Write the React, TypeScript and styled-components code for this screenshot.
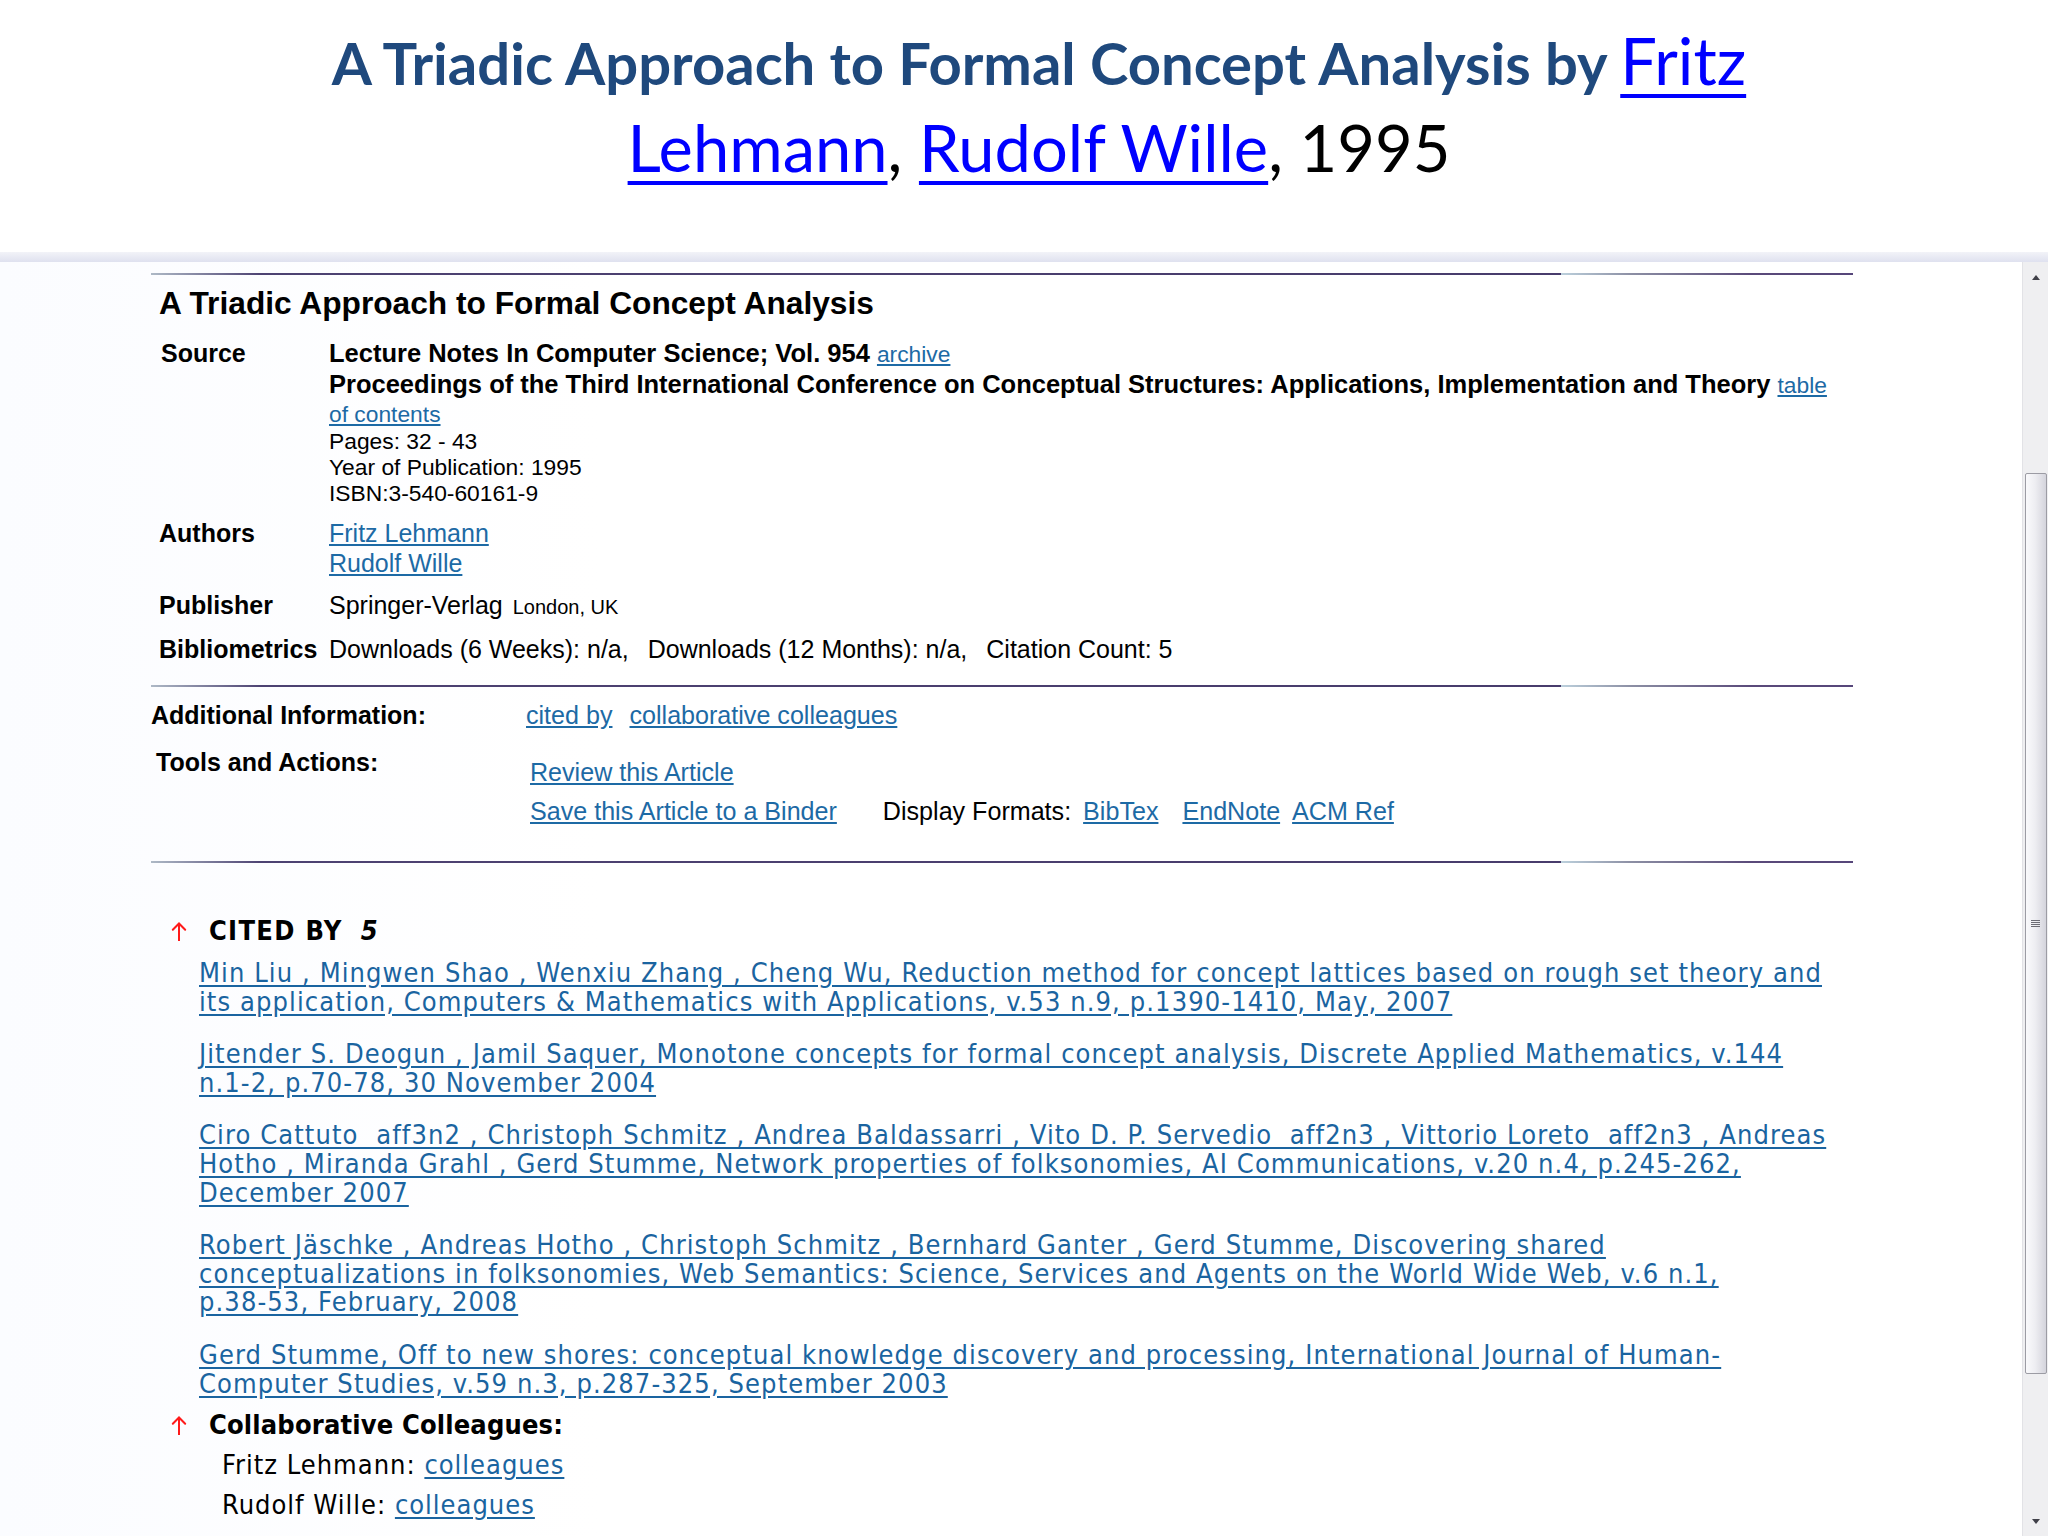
import React from "react";
import styled, { createGlobalStyle } from "styled-components";

const GlobalStyle = createGlobalStyle`
  html, body { margin: 0; padding: 0; background: #ffffff; }
  #root { width: 2048px; height: 1536px; }
`;

const Page = styled.div`
  width: 2048px;
  height: 1536px;
  overflow: hidden;
  display: flex;
  flex-direction: column;
  background: #ffffff;
`;

const SlideTitle = styled.h1`
  margin: 0;
  height: 252px;
  box-sizing: border-box;
  padding: 18px 250px 0 280px;
  text-align: center;
  font-family: Lato, "Open Sans", sans-serif;
  font-size: 58px;
  line-height: 85px;
  font-weight: 700;
  color: #1f497d;
`;

const TitleLink = styled.a`
  font-size: 65px;
  font-weight: 400;
  color: #0000ff;
  text-decoration: underline;
  text-decoration-thickness: 4px;
  text-underline-offset: 9px;
`;

const TitlePlain = styled.span`
  font-size: 65px;
  font-weight: 400;
  color: #000000;
`;

const Browser = styled.div`
  flex: 1;
  display: flex;
  flex-direction: column;
  min-height: 0;
`;

const TopBand = styled.div`
  height: 10px;
  background: linear-gradient(to bottom, #f2f3f8 0%, #dfe1ef 100%);
`;

const Viewport = styled.div`
  flex: 1;
  display: flex;
  min-height: 0;
`;

const Content = styled.div`
  flex: 1;
  padding: 11px 0 0 151px;
  font-family: "Liberation Sans", Arial, sans-serif;
  color: #000000;
  background: linear-gradient(to right, #fbfcff 0px, #ffffff 600px);
`;

const Rule = styled.div`
  width: 1702px;
  height: 2px;
  background: linear-gradient(
    to right,
    #aeb9c6 0px,
    #4d4272 110px,
    #483c6c 1410px,
    #bcd0dc 1410px,
    #8c8fa4 1480px,
    #5a4a7a 1600px,
    #56467a 1702px
  );
`;

const ArticleHeading = styled.h2`
  margin: 10px 0 0 8px;
  font-size: 31.7px;
  line-height: 36px;
  font-weight: 700;
`;

const DetailTable = styled.div`
  margin: 17px 0 21px 8px;
  display: grid;
  grid-template-columns: 170px 1510px;
  row-gap: 12px;
`;

const Label = styled.div<{ $indent?: number }>`
  font-size: 25px;
  line-height: 30px;
  font-weight: 700;
  padding-left: ${(p) => p.$indent ?? 0}px;
`;

const Value = styled.div`
  display: flex;
  flex-direction: column;
`;

const BoldLine = styled.div<{ $lh: number }>`
  font-size: 25.5px;
  line-height: ${(p) => p.$lh}px;
  font-weight: 700;
`;

const SmallLine = styled.div`
  font-size: 22.8px;
  line-height: 26px;
`;

const TextLine = styled.div<{ $gap?: number }>`
  font-size: 25px;
  line-height: 30px;
  display: flex;
  align-items: baseline;
  gap: ${(p) => p.$gap ?? 0}px;
`;

const SmallLink = styled.a`
  font-size: 22.8px;
  font-weight: 400;
  color: #1d6aa5;
  text-decoration: underline;
`;

const AcmLink = styled.a`
  color: #1d6aa5;
  text-decoration: underline;
  text-underline-offset: 2px;
`;

const Location = styled.span`
  font-size: 20px;
  margin-left: 10px;
`;

const ActionTable = styled.div`
  margin: 13px 0 35px 0;
  display: grid;
  grid-template-columns: 375px 1fr;
  row-gap: 17px;
`;

const ActionLabel = styled.div<{ $indent: number }>`
  font-size: 25px;
  line-height: 30px;
  font-weight: 700;
  padding-left: ${(p) => p.$indent}px;
`;

const ActionValues = styled.div<{ $indent: number; $top: number }>`
  padding-left: ${(p) => p.$indent}px;
  padding-top: ${(p) => p.$top}px;
  display: flex;
  flex-direction: column;
  row-gap: 9px;
  font-size: 25.1px;
  line-height: 30px;
`;

const Spaced = styled.span<{ $ml: number }>`
  margin-left: ${(p) => p.$ml}px;
`;

const Section = styled.section`
  font-family: "DejaVu Sans Condensed", "DejaVu Sans", sans-serif;
  font-stretch: condensed;
`;

const SectionHeading = styled.div<{ $top: number; $spacing: number }>`
  margin: ${(p) => p.$top}px 0 0 20px;
  display: flex;
  align-items: center;
  gap: 22px;
  font-size: 27px;
  line-height: 32px;
  font-weight: 700;
  letter-spacing: ${(p) => p.$spacing}px;
  color: #000;
`;

const Count = styled.span`
  font-style: italic;
  margin-left: 18px;
`;

const CitationList = styled.div`
  margin: 12px 0 0 48px;
  display: flex;
  flex-direction: column;
  row-gap: 24px;
`;

const Citation = styled.a`
  display: block;
  font-size: 27px;
  line-height: 28.6px;
  letter-spacing: 1.1px;
  white-space: nowrap;
  color: #1a64a0;
  text-decoration: underline;
  text-underline-offset: 3px;
`;

const ColleagueList = styled.div`
  margin: 8px 0 0 71px;
  display: flex;
  flex-direction: column;
  row-gap: 8px;
`;

const ColleagueRow = styled.div`
  font-size: 27px;
  line-height: 32px;
  letter-spacing: 1px;
  color: #000;
`;

const ColleagueLink = styled.a`
  color: #1a64a0;
  text-decoration: underline;
  text-underline-offset: 3px;
`;

const Scrollbar = styled.div`
  width: 26px;
  background: #efeff1;
  border-left: 1px solid #e2e2e6;
  display: flex;
  flex-direction: column;
  align-items: center;
  box-sizing: border-box;
`;

const ArrowButton = styled.div`
  height: 30px;
  width: 100%;
  display: flex;
  align-items: center;
  justify-content: center;
`;

const Thumb = styled.div<{ $top: number; $height: number }>`
  margin-top: ${(p) => p.$top}px;
  height: ${(p) => p.$height}px;
  width: 22px;
  box-sizing: border-box;
  border: 1px solid #9c9ca4;
  border-radius: 2px;
  background: linear-gradient(to right, #fafafc 0%, #eeeef2 45%, #d4d4dc 100%);
  display: flex;
  align-items: center;
  justify-content: center;
`;

const Gripper = styled.div`
  width: 9px;
  height: 8px;
  background: repeating-linear-gradient(
    to bottom,
    #6c6c74 0px,
    #6c6c74 1px,
    transparent 1px,
    transparent 2px
  );
`;

const TrackFill = styled.div`
  flex: 1;
`;

const UpArrow = () => (
  <svg width="16" height="21" viewBox="0 0 16 21" aria-hidden>
    <line x1="8" y1="2.5" x2="8" y2="20" stroke="#ff1a1a" strokeWidth="2" />
    <polyline
      points="1.8,8.8 8,2.5 14.2,8.8"
      fill="none"
      stroke="#ff1a1a"
      strokeWidth="2"
      strokeLinecap="round"
    />
  </svg>
);

const ScrollTriangle = ({ up }: { up: boolean }) => (
  <svg width="8" height="5" viewBox="0 0 8 5" aria-hidden>
    <polygon points={up ? "0,5 4,0 8,5" : "0,0 8,0 4,5"} fill="#404048" />
  </svg>
);

const citations: string[][] = [
  [
    "Min Liu , Mingwen Shao , Wenxiu Zhang , Cheng Wu, Reduction method for concept lattices based on rough set theory and",
    "its application, Computers & Mathematics with Applications, v.53 n.9, p.1390-1410, May, 2007",
  ],
  [
    "Jitender S. Deogun , Jamil Saquer, Monotone concepts for formal concept analysis, Discrete Applied Mathematics, v.144",
    "n.1-2, p.70-78, 30 November 2004",
  ],
  [
    "Ciro Cattuto \u00a0aff3n2 , Christoph Schmitz , Andrea Baldassarri , Vito D. P. Servedio \u00a0aff2n3 , Vittorio Loreto \u00a0aff2n3 , Andreas",
    "Hotho , Miranda Grahl , Gerd Stumme, Network properties of folksonomies, AI Communications, v.20 n.4, p.245-262,",
    "December 2007",
  ],
  [
    "Robert J\u00e4schke , Andreas Hotho , Christoph Schmitz , Bernhard Ganter , Gerd Stumme, Discovering shared",
    "conceptualizations in folksonomies, Web Semantics: Science, Services and Agents on the World Wide Web, v.6 n.1,",
    "p.38-53, February, 2008",
  ],
  [
    "Gerd Stumme, Off to new shores: conceptual knowledge discovery and processing, International Journal of Human-",
    "Computer Studies, v.59 n.3, p.287-325, September 2003",
  ],
];

export default function App() {
  return (
    <>
      <GlobalStyle />
      <Page>
        <SlideTitle>
          A Triadic Approach to Formal Concept Analysis by{" "}
          <TitleLink href="#">Fritz</TitleLink>{" "}
          <TitleLink href="#">Lehmann</TitleLink>
          <TitlePlain>, </TitlePlain>
          <TitleLink href="#">Rudolf Wille</TitleLink>
          <TitlePlain>, 1995</TitlePlain>
        </SlideTitle>
        <Browser>
          <TopBand />
          <Viewport>
            <Content>
              <Rule />
              <ArticleHeading>A Triadic Approach to Formal Concept Analysis</ArticleHeading>
              <DetailTable>
                <Label $indent={2}>Source</Label>
                <Value>
                  <BoldLine $lh={31}>
                    Lecture Notes In Computer Science; Vol. 954{" "}
                    <SmallLink href="#">archive</SmallLink>
                  </BoldLine>
                  <BoldLine $lh={28}>
                    Proceedings of the Third International Conference on Conceptual Structures:
                    Applications, Implementation and Theory{" "}
                    <SmallLink href="#">table of contents</SmallLink>
                  </BoldLine>
                  <SmallLine>Pages: 32 - 43</SmallLine>
                  <SmallLine>Year of Publication: 1995</SmallLine>
                  <SmallLine>ISBN:3-540-60161-9</SmallLine>
                </Value>
                <Label>Authors</Label>
                <Value>
                  <TextLine>
                    <AcmLink href="#">Fritz Lehmann</AcmLink>
                  </TextLine>
                  <TextLine>
                    <AcmLink href="#">Rudolf Wille</AcmLink>
                  </TextLine>
                </Value>
                <Label>Publisher</Label>
                <Value>
                  <TextLine>
                    <span>
                      Springer-Verlag<Location>London, UK</Location>
                    </span>
                  </TextLine>
                </Value>
                <Label>Bibliometrics</Label>
                <Value>
                  <TextLine $gap={19}>
                    <span>Downloads (6 Weeks): n/a,</span>
                    <span>Downloads (12 Months): n/a,</span>
                    <span>Citation Count: 5</span>
                  </TextLine>
                </Value>
              </DetailTable>
              <Rule />
              <ActionTable>
                <ActionLabel $indent={0}>Additional Information:</ActionLabel>
                <ActionValues $indent={0} $top={0}>
                  <span>
                    <AcmLink href="#">cited by</AcmLink>
                    <Spaced $ml={17}>
                      <AcmLink href="#">collaborative colleagues</AcmLink>
                    </Spaced>
                  </span>
                </ActionValues>
                <ActionLabel $indent={5}>Tools and Actions:</ActionLabel>
                <ActionValues $indent={4} $top={10}>
                  <span>
                    <AcmLink href="#">Review this Article</AcmLink>
                  </span>
                  <span>
                    <AcmLink href="#">Save this Article to a Binder</AcmLink>
                    <Spaced $ml={46}>Display Formats:</Spaced>
                    <Spaced $ml={12}>
                      <AcmLink href="#">BibTex</AcmLink>
                    </Spaced>
                    <Spaced $ml={24}>
                      <AcmLink href="#">EndNote</AcmLink>
                    </Spaced>
                    <Spaced $ml={12}>
                      <AcmLink href="#">ACM Ref</AcmLink>
                    </Spaced>
                  </span>
                </ActionValues>
              </ActionTable>
              <Rule />
              <Section>
                <SectionHeading $top={52} $spacing={1.3}>
                  <UpArrow />
                  <span>
                    CITED BY<Count>5</Count>
                  </span>
                </SectionHeading>
                <CitationList>
                  {citations.map((lines) => (
                    <Citation key={lines[0]} href="#">
                      {lines.map((line, i) => (
                        <React.Fragment key={i}>
                          {i > 0 && <br />}
                          {line}
                        </React.Fragment>
                      ))}
                    </Citation>
                  ))}
                </CitationList>
                <SectionHeading $top={11} $spacing={0.16}>
                  <UpArrow />
                  <span>Collaborative Colleagues:</span>
                </SectionHeading>
                <ColleagueList>
                  <ColleagueRow>
                    Fritz Lehmann: <ColleagueLink href="#">colleagues</ColleagueLink>
                  </ColleagueRow>
                  <ColleagueRow>
                    Rudolf Wille: <ColleagueLink href="#">colleagues</ColleagueLink>
                  </ColleagueRow>
                </ColleagueList>
              </Section>
            </Content>
            <Scrollbar>
              <ArrowButton>
                <ScrollTriangle up />
              </ArrowButton>
              <Thumb $top={181} $height={901}>
                <Gripper />
              </Thumb>
              <TrackFill />
              <ArrowButton>
                <ScrollTriangle up={false} />
              </ArrowButton>
            </Scrollbar>
          </Viewport>
        </Browser>
      </Page>
    </>
  );
}
